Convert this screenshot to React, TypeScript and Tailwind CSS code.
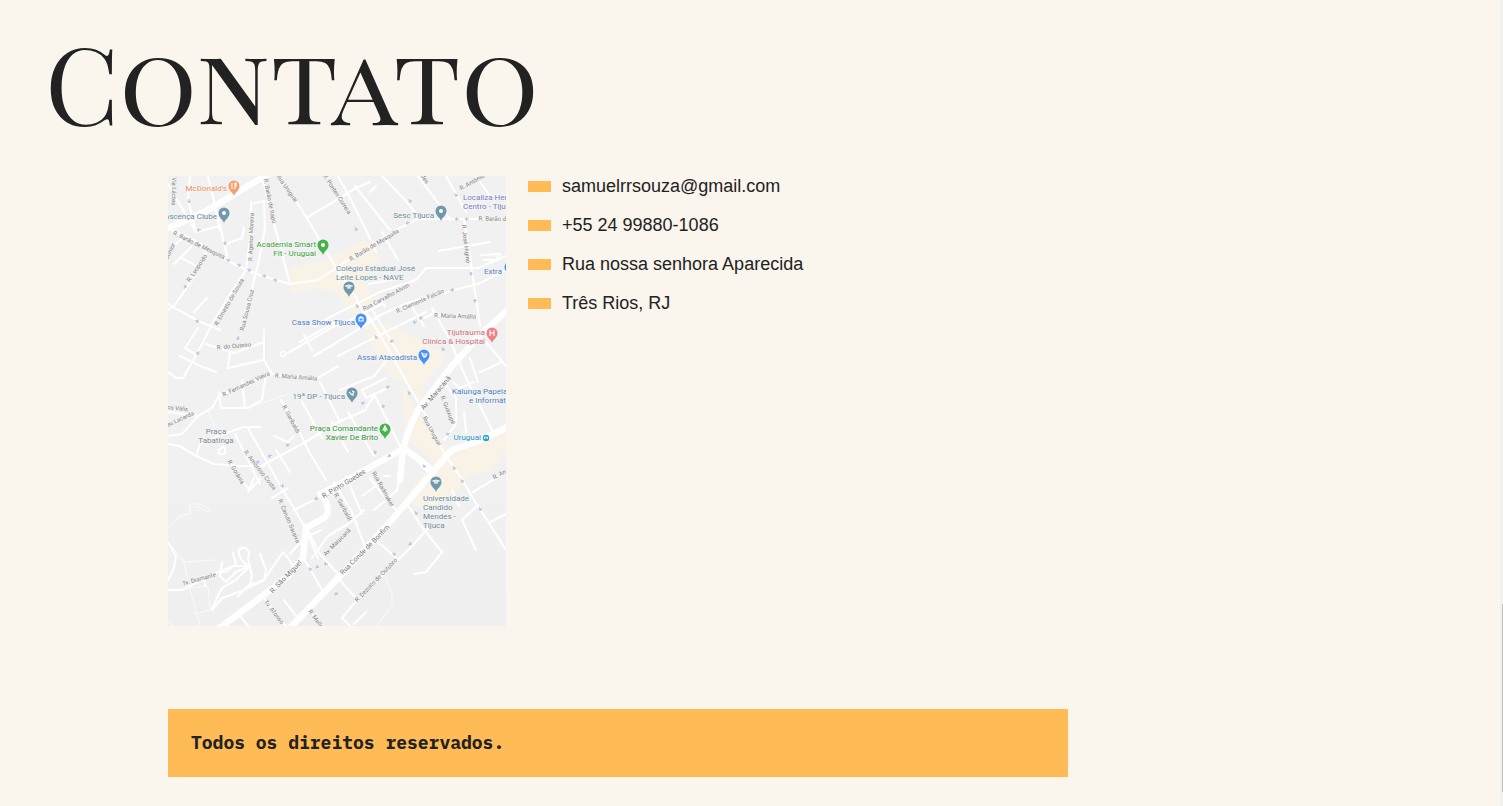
const BLOCKS = [
  "M122 92 L158 84 L196 64 L206 70 L212 84 L196 100 L206 128 L186 140 L168 116 L150 112 L122 118 Z",
  "M196 148 L226 150 L262 172 L278 176 L272 190 L256 206 L252 230 L238 206 L222 200 L206 172 Z",
  "M235 208 L246 232 L256 246 L274 262 L282 276 L268 290 L256 276 L238 262 Z",
  "M272 280 L298 270 L338 252 L338 274 L322 296 L300 300 L288 318 L256 334 L236 324 L248 306 L262 292 Z",
];

const MINOR_ROADS = [
  "M0 8 L8 22 L28 56 L52 50 M22 0 L20 24 L28 56",
  "M40 0 L52 50 L60 84 M46 28 L52 54",
  "M58 68 L74 62 L76 52",
  "M0 52 L26 64 L66 88 L88 98 L122 108 L150 104 L168 92 L196 74 L232 52 L250 43 L338 43",
  "M95 4 L103 36 L112 70 L122 108",
  "M110 0 L128 25 L140 44 L168 92 L186 118 L200 144",
  "M84 28 L96 25 L97 52 L91 84 L82 120 L74 150",
  "M83 26 L82 62 L78 94 L62 118 L43 150 L30 176 L15 202 L8 202 L0 196",
  "M138 42 L162 28 L188 12 L202 6 M170 0 L184 26 L198 54 L208 76",
  "M187 10 L222 54 M202 16 L208 10",
  "M214 0 L238 25 L250 40 M250 0 L282 43 M278 0 L298 36 M308 0 L322 20",
  "M296 43 L302 80 L306 110 L312 150",
  "M214 56 L230 84 M271 75 L322 66 M313 79 L332 78 L328 84 L315 84",
  "M338 80 L310 92 L258 92 L248 104 L212 116 L168 138 L146 150",
  "M338 94 L310 108 L286 114 L242 126 L214 138 L186 156 L146 180",
  "M243 130 L256 150 M201 108 L233 102 M210 122 L217 130 M256 142 L264 138 L308 142",
  "M0 76 L10 66 L18 60 M6 88 L24 70 M38 76 L24 104 L6 130 L0 134",
  "M0 128 L28 144 L52 154 M26 136 L39 122 M14 82 L30 91",
  "M30 152 L17 172 L27 178 M12 180 L32 190 L48 196",
  "M38 168 L66 177 L96 166 M62 176 L60 192 L95 184 M96 154 L96 184 L104 198 L128 202 L150 202 L170 190",
  "M132 166 L168 146 M120 177 L170 148 M136 159 L144 174",
  "M104 198 L78 208 L51 220 L44 232 L30 240 L0 236 M51 216 L53 232 L80 232 L94 224 L98 198",
  "M74 204 L77 232 M30 240 L14 258 L0 260",
  "M0 268 L12 270 L28 280 L46 288 L72 290 L96 290 M28 280 L32 268 L55 258 L76 251 L92 251",
  "M50 274 L57 270 L57 278 L51 278 Z",
  "M67 258 L78 280 L92 308 M80 252 L108 302 M113 224 L130 252 L140 274 L158 304",
  "M93 290 L134 268 L170 246 L198 234 M106 260 L120 266 L126 260",
  "M152 206 L172 246 M134 226 L154 262 M108 274 L122 296",
  "M198 136 L222 176 L242 212 L258 240 L278 282",
  "M222 180 L206 200 L172 214 M194 214 L218 202 M194 214 L198 222 L220 212",
  "M180 236 L206 280 M206 218 L232 270 M164 246 L180 276 M198 232 L206 220",
  "M170 150 L190 140 L214 128 M170 180 L218 156 L258 136 M202 130 L232 180",
  "M264 132 L282 164 L290 184 L300 206 L314 234 L326 258",
  "M285 206 L292 212 L306 206 M312 196 L334 186 M302 182 L310 206",
  "M278 210 L288 222 L288 248 L276 264 M296 236 L298 256 M318 166 L338 190",
  "M238 274 L248 284 L264 300 M278 280 L292 300 L306 324 L328 358 L338 374",
  "M305 316 L338 296 M322 346 L338 338 M284 314 L291 330 M309 330 L294 344 L308 374",
  "M239 328 L256 354 L274 376 L268 384 L258 396 L246 398",
  "M262 350 L244 370 L230 384 L206 408 L184 430 L174 442 L182 450",
  "M208 364 L228 382 M168 400 L188 422 M198 436 L186 448",
  "M166 306 L184 336 L198 374 M178 300 L194 338 M202 302 L216 320 L230 336",
  "M232 300 L229 314 L218 324 L206 334 M216 300 L222 300 M194 320 L208 310",
  "M108 302 L116 316 L126 332 L137 352 L150 382 M126 334 L148 323 M104 322 L120 312",
  "M80 316 L86 302 M73 304 L82 314 L92 303 M136 348 L152 378 L170 398",
  "M122 378 L136 362 L153 354 M144 382 L160 360 L180 348 L196 334",
  "M134 380 L144 396 L154 414 M95 420 L108 440 L118 450 M116 424 L128 440 M142 434 L150 450",
  "M0 414 L14 414 L30 406 L50 396 L66 390 L82 390 M0 366 L8 380 L6 392 L0 404",
  "M82 390 C74 388 68 376 72 373 C78 370 83 374 80 382 L84 400 L82 408",
  "M65 377 L68 388 L58 396 L52 396 M54 386 L52 400 L58 406 L68 396 L82 390",
  "M92 378 L98 394 L96 404 L76 414 L54 422 L44 434 M82 408 L70 420",
  "M82 390 L68 404 L54 412 L44 432 M84 408 L96 404 L115 376 L120 382 L126 392 M72 440 L80 450 M36 400 L37 410",
];

const THIN_ROADS = [
  "M0 352 L12 340 L22 338 L22 328 L32 328 L42 332 L40 336 L28 330",
  "M0 366 L16 386 L48 384 M16 386 L22 414 L32 450 M22 412 L40 410 L42 434 L26 438 M0 446 L5 450",
  "M40 234 L46 250 M80 232 L120 218 M218 402 L224 418 L224 430 L208 450",
];

const MAJOR_ROADS = [
  "M-4 54 L36 36 L60 22 L102 -3",
  "M342 132 L313 158 L284 190 L250 234 L240 256 L235 273 L232 304",
  "M342 250 L308 266 L284 274 L266 294 L246 318 L222 346 L170 402 L122 452",
  "M235 273 L204 290 L170 309 L152 318 C162 328 162 340 154 343 L138 352 L135 382 L120 400 L97 418 L50 453",
  "M237 273 L252 284 L266 296",
];

const STREETS: [string, number, number, number][] = [
  ["R. Via Láctea", 6, 12, 91],
  ["R. Barão de Itapú", 102, 25, 79],
  ["Rua Uruguai", 119, 12, 55],
  ["R. Pontes Correia", 169, 18, 57],
  ["R. Agenor Moreira", 83, 61, -88],
  ["R. Barão de Mesquita", 31, 69, 26],
  ["R. Barão de Mesquita", 206, 69, -31],
  ["R. Barão de Mesquita", 339, 43, 1],
  ["R. Leopoldo", 29, 92, -56],
  ["Junior", 2, 75, -64],
  ["R. Ernesto de Souza", 61, 126, -60],
  ["Rua Sousa Cruz", 79, 134, -76],
  ["R. Antônio", 304, 6, -29],
  ["des", 257, 3, 56],
  ["R. José Higino", 298, 68, 83],
  ["Rua Carvalho Alvim", 218, 121, -28],
  ["R. Clemente Falcão", 252, 125, -24],
  ["R. Maria Amália", 287, 140, 2],
  ["R. do Outeiro", 66, 170, -5],
  ["R. Fernandes Vieira", 78, 208, -25],
  ["R. Maria Amália", 128, 201, 4],
  ["dos Valis", 8, 232, 6],
  ["Abreu Lacerda", 8, 245, -25],
  ["R. Garibaldi", 123, 243, 62],
  ["R. Goiânia", 68, 296, 59],
  ["R. Amoroso Costa", 92, 294, 52],
  ["R. Guaxupé", 280, 234, 68],
  ["Rua Uruguai", 264, 255, 61],
  ["R. Garibaldi", 175, 331, 61],
  ["Rua Radmaker", 215, 313, 61],
  ["R. Canuto Saraiva", 121, 345, 67],
  ["Av. Maracanã", 169, 366, -45],
  ["Tv. Diamante", 31, 403, -16],
  ["Tv. Afonso", 106, 436, 52],
  ["R. Mello", 148, 443, 56],
  ["R. Dezoito de Outubro", 208, 404, -46],
  ["R. Andrade", 338, 295, -27],
];

const AVENUES: [string, number, number, number][] = [
  ["Av. Maracanã", 268, 217, -49],
  ["R. Pinto Guedes", 176, 308, -31],
  ["Rua Conde de Bonfim", 197, 374, -45],
  ["R. São Miguel", 118, 401, -46],
];

type Place = { lines: string[]; x: number; y: number; color: string; anchor?: "start" | "middle" | "end" };

const PLACES: Place[] = [
  { lines: ["McDonald's"], x: 59, y: 15, color: "#ef9062", anchor: "end" },
  { lines: ["Renascença Clube"], x: 49, y: 43, color: "#6c8c9a", anchor: "end" },
  { lines: ["Academia Smart", "Fit - Uruguai"], x: 148, y: 71, color: "#3ea03e", anchor: "end" },
  { lines: ["Sesc Tijuca"], x: 266, y: 42, color: "#6c8c9a", anchor: "end" },
  { lines: ["Localiza Hertz", "Centro - Tijuca"], x: 295, y: 24, color: "#757fba" },
  { lines: ["Colégio Estadual José", "Leite Lopes - NAVE"], x: 168, y: 95, color: "#6c8c9a" },
  { lines: ["Extra"], x: 334, y: 98, color: "#5580c4", anchor: "end" },
  { lines: ["Casa Show Tijuca"], x: 187, y: 149, color: "#4f7dc5", anchor: "end" },
  { lines: ["Tijutrauma", "Clínica & Hospital"], x: 317, y: 159, color: "#cc6e7a", anchor: "end" },
  { lines: ["Assaí Atacadista"], x: 249, y: 184, color: "#4f7dc5", anchor: "end" },
  { lines: ["Kalunga Papelaria"], x: 284, y: 218, color: "#4f7dc5" },
  { lines: ["e Informática"], x: 301, y: 227, color: "#4f7dc5" },
  { lines: ["19ª DP - Tijuca"], x: 177, y: 223, color: "#6c8c9a", anchor: "end" },
  { lines: ["Praça Comandante", "Xavier De Brito"], x: 210, y: 255, color: "#37943c", anchor: "end" },
  { lines: ["Praça", "Tabatinga"], x: 48, y: 258, color: "#748c97", anchor: "middle" },
  { lines: ["Uruguai"], x: 313, y: 264, color: "#1b98cc", anchor: "end" },
  { lines: ["Universidade", "Candido", "Mendes -", "Tijuca"], x: 255, y: 325, color: "#6c8c9a" },
];

const PINS: [number, number, string, string][] = [
  [66, 20, "#f5a06d", "M-2 -3 V3 M1 3 V-3 H2 V0 H1"],
  [56, 47, "#7398aa", "dot"],
  [155, 79, "#45b549", "dot"],
  [273, 45, "#7398aa", "dot"],
  [181, 121, "#7398aa", "M-3 -1 L0 -2 L3 -1 L0 0 Z M-2 1 H2"],
  [193, 153, "#4b91f5", "M-2 -1 H2 V2 H-2 Z M-1 -1 V-2 H1 V-1"],
  [324, 167, "#ee8086", "M-2 -3 V3 M2 -3 V3 M-2 0 H2"],
  [256, 189, "#4b91f5", "M-3 -2 H-2 L-1 1 H2 L3 -1 H-2 M-1 2 H2"],
  [184, 227, "#7398aa", "M-3 -1 L0 2 L2 -1 L0 -2 M0 2 L2 2"],
  [217, 263, "#45b549", "M0 -3 L2 1 H-2 Z M0 -1 V3"],
  [268, 316, "#7398aa", "M-3 -1 L0 -2 L3 -1 L0 0 Z M-2 1 H2"],
  [342, 101, "#4b91f5", "dot"],
];

const ARROWS: [number, number, number][] = [
  [21, 25, 90], [31, 54, 180], [57, 67, 90], [60, 84, 25], [71, 89, 25], [81, 94, 30],
  [96, 100, 20], [107, 104, 15], [17, 111, -60], [29, 145, 25], [188, 53, 60], [242, 25, 55],
  [240, 47, 160], [288, 19, 45], [289, 43, 180], [299, 43, 180], [303, 98, -90], [284, 114, -10],
  [307, 125, -90], [189, 130, 60], [247, 146, 160], [253, 142, 160], [70, 162, 110], [30, 177, 120],
  [120, 269, 150], [102, 280, 150], [90, 286, 150], [208, 161, 55], [224, 165, 150], [275, 173, 65],
  [220, 211, 150], [241, 217, 60], [195, 227, 150], [215, 230, 60], [207, 276, 60], [221, 280, -25],
  [280, 258, 150], [256, 290, 45], [286, 292, 60], [114, 310, 0], [148, 323, -25], [294, 305, 50],
  [248, 337, 60], [312, 333, 60], [242, 368, -45], [226, 378, 45], [142, 393, 45], [149, 391, -45],
  [158, 388, 180], [168, 418, -45],
];

function NeighborhoodMap() {
  return (
    <svg
      viewBox="0 0 338 450"
      role="img"
      aria-label="Mapa da Tijuca"
      className="block w-[338px] shrink-0 font-[Roboto,sans-serif]"
    >
      <defs>
        <linearGradient id="land" x1="0" y1="0" x2="0" y2="1">
          <stop offset="0" stopColor="#f1f1f1" />
          <stop offset="0.6" stopColor="#f1f1f1" />
          <stop offset="1" stopColor="#efefef" />
        </linearGradient>
      </defs>
      <rect width="338" height="450" fill="url(#land)" />
      {BLOCKS.map((d) => (
        <path key={d} d={d} fill="#f9f3e7" />
      ))}
      <g fill="none" stroke="#fff" strokeLinecap="round" strokeLinejoin="round">
        {THIN_ROADS.map((d) => (
          <path key={d} d={d} strokeWidth="0.7" />
        ))}
        {MINOR_ROADS.map((d) => (
          <path key={d} d={d} strokeWidth="2.1" />
        ))}
        {MAJOR_ROADS.map((d) => (
          <path key={d} d={d} strokeWidth="6.4" />
        ))}
        <circle cx="115" cy="178" r="2.5" strokeWidth="1.5" />
      </g>
      <g fill="none" stroke="#bcc0e0" strokeWidth="1.1">
        {ARROWS.map(([x, y, turn]) => (
          <path
            key={`${x}-${y}`}
            d="M-2 0 H1.5 M0 -1.5 L1.5 0 L0 1.5"
            transform={`translate(${x} ${y}) rotate(${turn})`}
          />
        ))}
      </g>
      <g fill="#808080" stroke="#f5f5f5" strokeWidth="1" paintOrder="stroke" textAnchor="middle" fontSize="6">
        {STREETS.map(([name, x, y, turn]) => (
          <text key={`${name}-${x}`} transform={`translate(${x} ${y}) rotate(${turn})`} dy="2">
            {name}
          </text>
        ))}
      </g>
      <g fill="#757575" stroke="#fff" strokeWidth="1" paintOrder="stroke" textAnchor="middle" fontSize="7">
        {AVENUES.map(([name, x, y, turn]) => (
          <text key={name} transform={`translate(${x} ${y}) rotate(${turn})`} dy="2">
            {name}
          </text>
        ))}
      </g>
      {PINS.map(([x, y, color, glyph]) => (
        <g key={`${x}-${y}`} transform={`translate(${x} ${y})`}>
          <path d="M0 0 C-1 -4 -5.5 -5 -5.5 -10 A5.5 5.5 0 0 1 5.5 -10 C5.5 -5 1 -4 0 0 Z" fill={color} />
          {glyph === "dot" ? (
            <circle cy="-10" r="2" fill="#fff" />
          ) : (
            <path d={glyph} transform="translate(0 -10)" fill="none" stroke="#fff" strokeWidth="1.1" />
          )}
        </g>
      ))}
      <circle cx="318" cy="262" r="3.2" fill="#2a9fd0" />
      <path d="M316.5 263 V261 H319.5 V263 M316.5 262 H319.5" fill="none" stroke="#fff" strokeWidth="0.7" />
      <g fontSize="8" stroke="#f7f7f7" strokeWidth="1" paintOrder="stroke">
        {PLACES.map(({ lines, x, y, color, anchor }) => (
          <text key={lines[0]} y={y} fill={color} textAnchor={anchor ?? "start"}>
            {lines.map((line, i) => (
              <tspan key={line} x={x} dy={i === 0 ? 0 : 9}>
                {line}
              </tspan>
            ))}
          </text>
        ))}
      </g>
    </svg>
  );
}

const CONTACTS = ["samuelrrsouza@gmail.com", "+55 24 99880-1086", "Rua nossa senhora Aparecida", "Três Rios, RJ"];

export default function App() {
  return (
    <div className="flex min-h-screen bg-[#faf5ed] text-[#222]">
      <div className="min-w-0 flex-1">
        <section className="pt-6">
          <h1 className="pl-[45px] font-['Playfair_Display_SC','Liberation_Serif',serif] text-[108px] leading-[112px]">
            Contato
          </h1>
          <div className="ml-[168px] mt-10 flex max-w-[900px] items-start gap-[22px]">
            <NeighborhoodMap />
            <ul className="flex flex-col gap-[18px] font-['Liberation_Sans',Arial,sans-serif] text-[18px] leading-[21px]">
              {CONTACTS.map((contact) => (
                <li key={contact} className="flex items-center gap-[11px]">
                  <span className="h-[11px] w-[23px] bg-[#ffbb55]" />
                  {contact}
                </li>
              ))}
            </ul>
          </div>
        </section>
        <footer className="mt-[83px] ml-[168px] max-w-[900px] bg-[#ffbb55] px-[23px] py-[22px] font-['IBM_Plex_Mono','Liberation_Mono',monospace] text-[18px] leading-6 font-bold">
          <p>Todos os direitos reservados.</p>
        </footer>
      </div>
      <div aria-hidden="true" className="flex w-[3px] flex-col items-end justify-end bg-[#f1f1f1] pb-3.5">
        <span className="h-[188px] w-px bg-[#c1c1c1]" />
      </div>
    </div>
  );
}
